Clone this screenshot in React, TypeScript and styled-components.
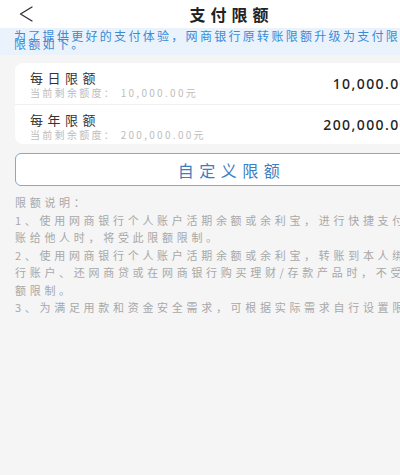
import React from "react";
import styled, { createGlobalStyle } from "styled-components";

interface LimitItem {
  id: string;
  title: string;
  remain: string;
  amount: string;
}

const limits: LimitItem[] = [
  { id: "day", title: "每日限额", remain: "当前剩余额度： 10,000.00元", amount: "10,000.00" },
  { id: "year", title: "每年限额", remain: "当前剩余额度： 200,000.00元", amount: "200,000.00" },
];

// line breaks follow the app's own wrapping
const notes: string[] = [
  "1、使用网商银行个人账户活期余额或余利宝，进行快捷支付或转\n账给他人时，将受此限额限制。",
  "2、使用网商银行个人账户活期余额或余利宝，转账到本人绑定的他\n行账户、还网商贷或在网商银行购买理财/存款产品时，不受此限\n额限制。",
  "3、为满足用款和资金安全需求，可根据实际需求自行设置限额。",
];

const App: React.FC = () => {
  return (
    <>
      <GlobalStyle />
      <StyledPage>
        <StyledHeader>
          <BackButton aria-label="返回">
            <svg width="14" height="16" viewBox="0 0 14 16" fill="none">
              <path d="M13 1L1.5 8L13 15" stroke="#333" strokeWidth="1.4" strokeLinecap="round" strokeLinejoin="round" />
            </svg>
          </BackButton>
          <h1>支付限额</h1>
        </StyledHeader>

        <Notice>为了提供更好的支付体验，网商银行原转账限额升级为支付限额，具体限额如下。</Notice>

        <LimitCard>
          {limits.map((item) => (
            <LimitRow key={item.id}>
              <div className="info">
                <span className="title">{item.title}</span>
                <span className="remain">{item.remain}</span>
              </div>
              <span className="amount">{item.amount}</span>
            </LimitRow>
          ))}
        </LimitCard>

        <CustomButton type="button">自定义限额</CustomButton>

        <NoteList>
          <p>限额说明：</p>
          {notes.map((note) => (
            <p key={note}>{note}</p>
          ))}
        </NoteList>
      </StyledPage>
    </>
  );
};

const GlobalStyle = createGlobalStyle`
  html, body {
    margin: 0;
    padding: 0;
    background: #f5f5f5;
    overflow: hidden;
  }
  body {
    font-family: "Noto Sans CJK SC", "Noto Sans", sans-serif;
  }
  * {
    box-sizing: border-box;
  }
`;

const StyledPage = styled.div`
  width: 458px;
  min-height: 475px;
  background: #f5f5f5;
`;

const StyledHeader = styled.header`
  position: relative;
  height: 28px;
  background: #fff;
  display: flex;
  align-items: center;
  justify-content: center;

  h1 {
    margin: 0;
    font-size: 16px;
    font-weight: 600;
    letter-spacing: 5px;
    color: #222;
    line-height: 28px;
    padding-left: 5px;
  }
`;

const BackButton = styled.button`
  position: absolute;
  left: 19px;
  top: 6px;
  padding: 0;
  border: none;
  background: none;
  display: flex;
`;

const Notice = styled.div`
  background: #eaf3fb;
  color: #3a8ad6;
  font-size: 12px;
  letter-spacing: 2.3px;
  line-height: 8px;
  padding: 4px 0 0 14px;
  height: 27px;
  overflow: hidden;
`;

const LimitCard = styled.div`
  margin: 8px 15px 0;
  background: #fff;
  border-radius: 8px;
  overflow: hidden;
`;

const LimitRow = styled.div`
  display: flex;
  align-items: center;
  justify-content: space-between;
  height: 40.5px;
  padding: 0 34px 0 15px;

  & + & {
    border-top: 1px solid #f0f0f0;
  }

  .info {
    display: flex;
    flex-direction: column;
    align-self: flex-start;
    padding-top: 8px;
  }

  .title {
    font-size: 13px;
    letter-spacing: 4.5px;
    line-height: 14px;
    color: #333;
  }

  .remain {
    margin-top: 2px;
    font-size: 10px;
    letter-spacing: 2.3px;
    line-height: 12px;
    color: #bdbdbd;
  }

  .amount {
    font-family: "Noto Sans", "Liberation Sans", sans-serif;
    font-size: 14px;
    font-weight: 500;
    letter-spacing: 1.4px;
    color: #222;
  }
`;

const CustomButton = styled.button`
  display: block;
  margin: 9px 15px 0;
  width: calc(100% - 30px);
  height: 33px;
  background: #fff;
  border: 1.5px solid #8ba7c3;
  border-radius: 6px;
  color: #3b7dc2;
  font-family: "Noto Sans CJK SC", sans-serif;
  font-size: 16px;
  letter-spacing: 5.5px;
  padding: 0 0 0 5px;
`;

const NoteList = styled.div`
  padding: 8px 0 0 15px;
  color: #a8a8a8;
  font-size: 11px;
  letter-spacing: 3.7px;
  line-height: 17.5px;

  p {
    margin: 0;
    white-space: pre-line;
  }
`;

export default App;
